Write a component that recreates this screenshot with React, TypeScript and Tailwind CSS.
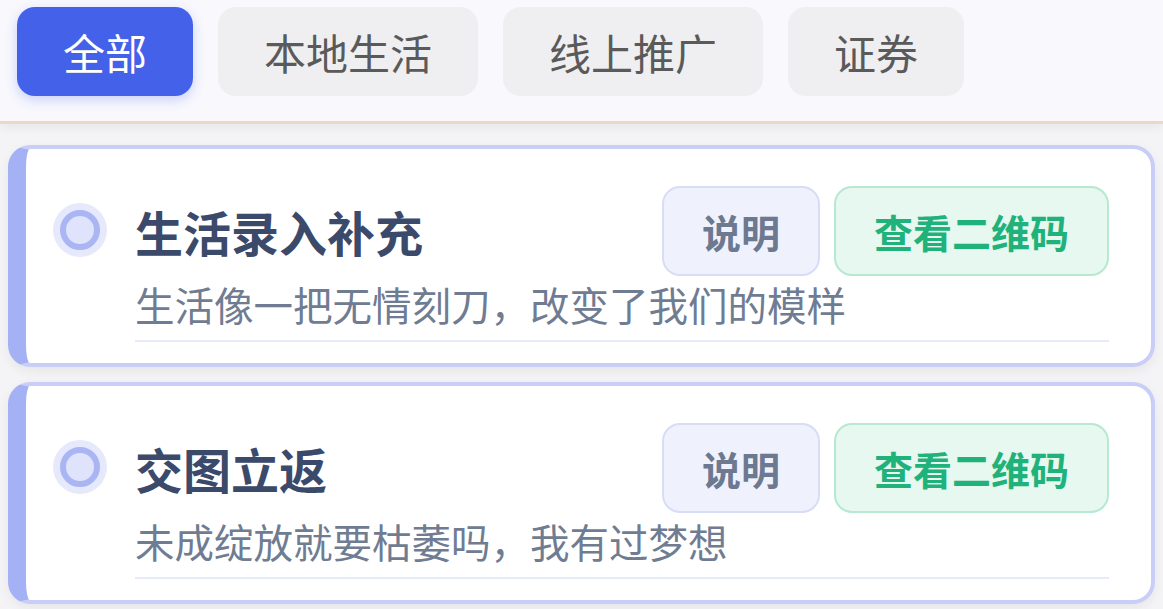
const tabs = ['全部', '本地生活', '线上推广', '证券'];

const items = [
  { title: '生活录入补充', desc: '生活像一把无情刻刀，改变了我们的模样' },
  { title: '交图立返', desc: '未成绽放就要枯萎吗，我有过梦想' },
];

function Radio() {
  return (
    <div className="flex h-[54px] w-[54px] shrink-0 items-center justify-center rounded-full bg-[#e6e9fc]">
      <div className="h-[40px] w-[40px] rounded-full border-[6px] border-[#aab5f4] bg-[#dfe3fb]" />
    </div>
  );
}

export default function App() {
  return (
    <div
      className="min-h-screen bg-[#f4f4f7]"
      style={{ fontFamily: '"Noto Sans CJK SC", "Noto Sans", sans-serif' }}
    >
      <header className="h-[124px] border-b-[3px] border-[#ead9c4] bg-[#f8f8fd] pt-[7px] shadow-[0_4px_10px_rgba(0,0,0,0.05)]">
        <div className="flex gap-[25px] pl-[17px]">
          {tabs.map((tab, idx) => (
            <div
              key={tab}
              className={`flex h-[89px] items-center rounded-[18px] px-[46px] text-[42px] leading-none ${
                idx === 0
                  ? 'bg-[#4461ea] text-white shadow-[0_4px_12px_rgba(68,97,234,0.25)]'
                  : 'bg-[#efeff1] text-[#5a5a5a]'
              }`}
            >
              {tab}
            </div>
          ))}
        </div>
      </header>

      <div className="flex flex-col gap-[15px] px-[8px] pt-[21px]">
        {items.map((item) => (
          <div
            key={item.title}
            className="flex h-[222px] rounded-[22px] border-[4px] border-l-[18px] border-[#c8cef7] border-l-[#a4b1f4] bg-white shadow-[0_4px_12px_rgba(0,0,0,0.06)]"
          >
            <div className="flex w-[109px] shrink-0 pl-[27px] pt-[54px]">
              <Radio />
            </div>
            <div className="flex flex-1 flex-col pr-[42px] pt-[37px]">
              <div className="flex h-[90px] items-center">
                <h2 className="flex-1 text-[48px] font-semibold leading-none text-[#3b4a6a]">
                  {item.title}
                </h2>
                <div className="flex gap-[14px]">
                  <button className="flex h-[90px] items-center rounded-[18px] border-2 border-[#d7ddf6] bg-[#eff2fd] px-[38px] text-[39px] font-semibold leading-none text-[#6c7990]">
                    说明
                  </button>
                  <button className="flex h-[90px] items-center rounded-[18px] border-2 border-[#b6e8d2] bg-[#e6f8ef] px-[38px] text-[39px] font-semibold leading-none text-[#1fb27a]">
                    查看二维码
                  </button>
                </div>
              </div>
              <p className="mt-[2px] text-[39.5px] leading-[52px] text-[#6f7c92]">{item.desc}</p>
              <div className="mt-[10px] h-[2px] bg-[#e7eaf8]" />
            </div>
          </div>
        ))}
      </div>
    </div>
  );
}
